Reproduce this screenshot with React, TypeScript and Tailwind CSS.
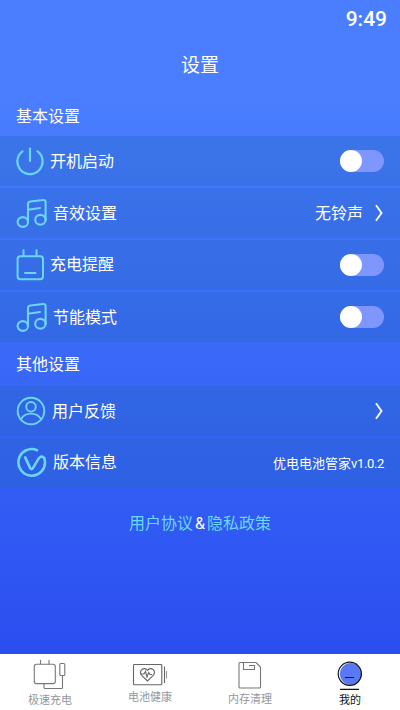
import React, { useState } from "react";

const PowerIcon = () => (
  <svg className="w-7 h-8 shrink-0" viewBox="0 0 28 32" fill="none" stroke="#6ad6fb" strokeWidth="2.2" strokeLinecap="round">
    <path d="M14 3.5V16" />
    <path d="M6.4 6.4A12.6 12.6 0 1 0 21.6 6.4" />
  </svg>
);

const MusicIcon = () => (
  <svg className="w-[31px] h-8 shrink-0" viewBox="0 0 31 32" fill="none" stroke="#6ad6fb" strokeWidth="2.1" strokeLinecap="round" strokeLinejoin="round">
    <ellipse cx="6.8" cy="25" rx="5.2" ry="4.9" />
    <ellipse cx="24.4" cy="22.8" rx="5.2" ry="4.9" />
    <path d="M12 25V7.2Q12 4.8 14.3 4.5L27.2 3Q29.6 2.8 29.6 5.2V23" />
    <path d="M12 12.7L24 11" />
  </svg>
);

const PlugIcon = () => (
  <svg className="w-7 h-8 shrink-0" viewBox="0 0 28 32" fill="none" stroke="#6ad6fb" strokeWidth="2" strokeLinecap="round">
    <rect x="1.6" y="7.2" width="25.4" height="23" rx="2.8" />
    <path d="M7.5 1.2V7M20.5 1.2V7M9 24H19.5" />
  </svg>
);

const UserIcon = () => (
  <svg className="w-[30px] h-8 shrink-0" viewBox="0 0 30 32" fill="none" stroke="#6ad6fb" strokeWidth="1.9" strokeLinecap="round">
    <circle cx="15" cy="16" r="13.3" />
    <circle cx="15" cy="11.8" r="4.8" />
    <path d="M4.9 24.3C7 20.5 10.6 18.6 15 18.6S23 20.5 25.1 24.3" />
  </svg>
);

const VersionIcon = () => (
  <svg className="w-[31px] h-8 shrink-0" viewBox="0 0 31 32" fill="none" stroke="#6ad6fb" strokeWidth="2.6" strokeLinecap="round" strokeLinejoin="round">
    <path d="M21 3.2A13.3 13.3 0 1 0 28.8 13.2C28.4 9.4 24.7 8.4 22.6 11.6L16.8 21.4Q15.5 22.8 14.3 21.4L9.2 10.4" />
  </svg>
);

const Chevron = () => (
  <svg className="w-[9px] h-[18px]" viewBox="0 0 9 18" fill="none" stroke="white" strokeWidth="1.9">
    <path d="M1 1.3L6.5 9L1 16.7" />
  </svg>
);

const Toggle = () => {
  const [on, setOn] = useState(false);

  return (
    <button
      onClick={() => setOn(!on)}
      className={`flex w-11 h-[22px] rounded-full bg-[#8096ff] ${on ? "justify-end" : "justify-start"}`}
    >
      <span className="size-[22px] rounded-full bg-white" />
    </button>
  );
};

interface RowProps {
  icon: React.ReactNode;
  label: string;
  labelClassName?: string;
  children?: React.ReactNode;
}

const Row: React.FC<RowProps> = ({ icon, label, labelClassName = "pt-0.5", children }) => (
  <div className="flex items-center h-[50px] px-4 bg-[#2467bf]/33">
    {icon}
    <span className={`ml-1.5 text-base leading-6 ${labelClassName}`}>{label}</span>
    <div className="ml-auto flex items-center">{children}</div>
  </div>
);

const ChargeTab = () => (
  <svg className="w-10 h-8" viewBox="0 0 40 32" fill="none" stroke="#777" strokeWidth="1.1">
    <rect x="4.3" y="6.3" width="21" height="19.3" rx="2.2" />
    <path d="M10.5 2V6.3M19 2V6.3M14 25.6V29.5Q14 30.5 15 30.5H31.5Q32.5 30.5 32.5 29.5V17.5" />
    <rect x="29.8" y="5.5" width="5" height="12" rx="1" />
  </svg>
);

const HealthTab = () => (
  <svg className="w-10 h-8" viewBox="0 0 40 32" fill="none" stroke="#666" strokeWidth="1.1">
    <rect x="3.5" y="7.5" width="28.3" height="20.3" rx="0.8" />
    <path d="M34.5 9.5V26" />
    <path d="M36.5 14V21.5" stroke="#999" />
    <path d="M17.5 24L12 18.6C8 14.2 13.7 8.9 17.5 13.3C21.3 8.9 27 14.2 23 18.6Z" />
    <path d="M10.5 17H14L15.5 14.5L17 20L18.7 15.5L20 17.5H22" />
  </svg>
);

const MemoryTab = () => (
  <svg className="w-10 h-8" viewBox="0 0 40 32" fill="none" stroke="#777" strokeWidth="1.1">
    <path d="M10 4.5H26L30.5 9V29Q30.5 30 29.5 30H10Q9 30 9 29V5.5Q9 4.5 10 4.5Z" />
    <path d="M13.5 4.5V11.5H24.5V7.5H19" />
  </svg>
);

const MineTab = () => (
  <svg className="w-10 h-8" viewBox="0 0 40 32" fill="none" stroke="#111" strokeWidth="1.2">
    <circle cx="20.8" cy="16" r="10.9" fill="#5878f4" stroke="none" />
    <circle cx="19.8" cy="15.8" r="11.6" />
    <path d="M15 19.5H24M10 31.4H29" />
  </svg>
);

const tabs = [
  { label: "极速充电", icon: <ChargeTab />, className: "text-[#94969d] pt-1 gap-0.5" },
  { label: "电池健康", icon: <HealthTab />, className: "text-[#94969d] pt-[3px]" },
  { label: "内存清理", icon: <MemoryTab />, className: "text-[#94969d] pt-1 gap-px" },
  { label: "我的", icon: <MineTab />, className: "text-[#111] pt-1 gap-0.5" },
];

const App = () => {
  return (
    <div className="flex flex-col w-[400px] h-[710px] overflow-hidden text-white font-['Roboto','Noto_Sans_CJK_SC',sans-serif]">
      <main className="h-[654px] shrink-0 bg-linear-to-b from-[#4a7eff] from-15% to-[#2b4df0]">
        <div className="flex h-[38px] items-center justify-end pr-[13px] text-[21px] leading-none font-medium">
          9:49
        </div>
        <h1 className="flex h-[54px] items-center justify-center pt-0.5 text-[19px]">设置</h1>

        <h2 className="flex h-11 items-center px-4 pt-[5px] text-base">基本设置</h2>
        <div className="flex flex-col gap-0.5">
          <Row icon={<PowerIcon />} label="开机启动">
            <Toggle />
          </Row>
          <Row icon={<MusicIcon />} label="音效设置">
            <span className="mr-3 pt-0.5 text-base leading-6">无铃声</span>
            <Chevron />
          </Row>
          <Row icon={<PlugIcon />} label="充电提醒" labelClassName="pt-0">
            <Toggle />
          </Row>
          <Row icon={<MusicIcon />} label="节能模式">
            <Toggle />
          </Row>
        </div>

        <h2 className="flex h-11 items-center px-4 pt-0.5 text-base">其他设置</h2>
        <div className="flex flex-col gap-0.5">
          <Row icon={<UserIcon />} label="用户反馈">
            <Chevron />
          </Row>
          <Row icon={<VersionIcon />} label="版本信息" labelClassName="pt-0">
            <span className="pt-0.5 text-[13px]">
              优电电池管家<span className="tracking-[-0.35px]">v1.0.2</span>
            </span>
          </Row>
        </div>

        <p className="mt-6 text-center text-base leading-6">
          <a className="text-[#6ad6fb]">用户协议</a>
          <span className="mx-0.5">&amp;</span>
          <a className="text-[#6ad6fb]">隐私政策</a>
        </p>
      </main>

      <nav className="grid grid-cols-4 h-14 bg-white">
        {tabs.map((tab) => (
          <div key={tab.label} className={`flex flex-col items-center ${tab.className}`}>
            {tab.icon}
            <span className="text-[11px] leading-[18px]">{tab.label}</span>
          </div>
        ))}
      </nav>
    </div>
  );
};

export default App;
